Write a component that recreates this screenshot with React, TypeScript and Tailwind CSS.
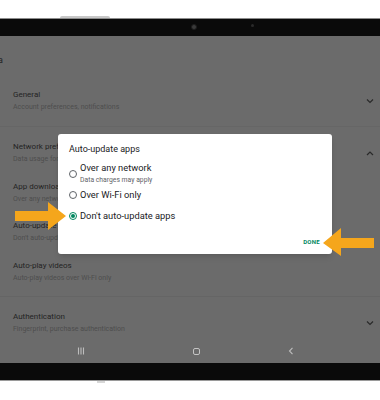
import React from 'react';

function Chevron({ up = false }: { up?: boolean }) {
  return (
    <svg width="8" height="6" viewBox="0 0 8 6" className="shrink-0">
      <path d={up ? 'M1 5 L4 2 L7 5' : 'M1 1.5 L4 4.5 L7 1.5'} fill="none" stroke="#2a2a2a" strokeWidth="1.2" />
    </svg>
  );
}

function Row({ title, sub, chevron, className = '' }: { title: string; sub: string; chevron?: 'up' | 'down'; className?: string }) {
  return (
    <div className={`flex items-center justify-between pl-[13px] pr-[6px] ${className}`}>
      <div className="flex flex-col">
        <span className="text-[8px] leading-[11px] text-[#242424] whitespace-nowrap">{title}</span>
        <span className="mt-[2px] text-[7px] leading-[10px] text-[#4e4e4e] whitespace-nowrap">{sub}</span>
      </div>
      {chevron && <Chevron up={chevron === 'up'} />}
    </div>
  );
}

function Radio({ checked = false }: { checked?: boolean }) {
  return checked ? (
    <span className="w-[8px] h-[8px] rounded-full border border-[#01875f] flex items-center justify-center shrink-0">
      <span className="block w-[4px] h-[4px] rounded-full bg-[#01875f]" />
    </span>
  ) : (
    <span className="block w-[8px] h-[8px] rounded-full border border-[#5f6368] shrink-0" />
  );
}

export default function App() {
  return (
    <div className="w-[380px] h-[400px] bg-white overflow-hidden flex flex-col relative" style={{ fontFamily: 'Roboto, "Noto Sans", sans-serif' }}>
      {/* top edge of the device */}
      <div className="h-[18px] relative shrink-0">
        <div className="absolute left-[60px] top-[16px] w-[50px] h-[2px] bg-[#c8c8c8] rounded-t-sm" />
      </div>
      <div className="h-[1px] bg-[#8c8c8c] shrink-0" />
      <div className="h-[17px] bg-[#0a0a0a] relative shrink-0">
        <span className="absolute left-[191px] top-[5px] w-[6px] h-[6px] rounded-full bg-[#3a3a3a] border border-[#1c1c1c]" />
        <span className="absolute left-[251px] top-[5px] w-[3px] h-[3px] rounded-full bg-[#2a2a2a]" />
      </div>

      {/* screen */}
      <div className="h-[327px] bg-[#6b6b6b] relative flex flex-col shrink-0">
        <div className="h-[53px] pt-[18px]">
          <span className="block -ml-[2px] text-[9px] leading-[12px] text-[#242424]">a</span>
        </div>
        <Row title="General" sub="Account preferences, notifications" chevron="down" />
        <div className="mt-[14px] h-px bg-[#666666]" />
        <Row className="mt-[14px]" title="Network preferences" sub="Data usage for apps" chevron="up" />
        <Row className="mt-[17px]" title="App download preference" sub="Over any network" />
        <Row className="mt-[16px]" title="Auto-update apps" sub="Don't auto-update apps" />
        <Row className="mt-[17px]" title="Auto-play videos" sub="Auto-play videos over Wi-Fi only" />
        <div className="mt-[13px] h-px bg-[#656565]" />
        <Row className="mt-[14px]" title="Authentication" sub="Fingerprint, purchase authentication" chevron="down" />

        {/* navigation bar */}
        <div className="mt-auto h-[24px] flex items-center">
          <div className="w-[160px] flex justify-center pl-[2px]">
            <svg width="8" height="8" viewBox="0 0 8 8">
              <path d="M1.5 0.5 V7.5 M4 0.5 V7.5 M6.5 0.5 V7.5" stroke="#bdbdbd" strokeWidth="1.1" />
            </svg>
          </div>
          <div className="w-[72px] flex justify-center">
            <span className="w-[7px] h-[7px] rounded-[2px] border border-[#c4c4c4]" />
          </div>
          <div className="flex-1 flex justify-center pr-[30px]">
            <svg width="6" height="8" viewBox="0 0 6 8">
              <path d="M4.5 0.8 L1.5 4 L4.5 7.2" fill="none" stroke="#bdbdbd" strokeWidth="1.1" />
            </svg>
          </div>
        </div>

        {/* dialog */}
        <div className="absolute left-[58px] top-[98px] w-[274px] h-[120px] bg-white rounded-[3px] shadow-md flex flex-col pl-[11px] pr-[12px]">
          <span className="mt-[10px] text-[9px] leading-[11px] text-[#202124]">Auto-update apps</span>
          <div className="mt-[7px] flex items-center gap-[3px]">
            <Radio />
            <div className="flex flex-col">
              <span className="text-[9.3px] leading-[12px] text-[#202124]">Over any network</span>
              <span className="mt-[2px] text-[6.8px] leading-[9px] text-[#5f6368]">Data charges may apply</span>
            </div>
          </div>
          <div className="mt-[4px] flex items-center gap-[3px]">
            <Radio />
            <span className="text-[9.3px] leading-[12px] text-[#202124]">Over Wi-Fi only</span>
          </div>
          <div className="mt-[9px] flex items-center gap-[3px]">
            <Radio checked />
            <span className="text-[9.3px] leading-[12px] text-[#202124]">Don't auto-update apps</span>
          </div>
          <div className="mt-auto mb-[8px] flex justify-end">
            <span className="text-[6px] leading-[8px] font-bold tracking-[0.3px] text-[#01875f]">DONE</span>
          </div>
        </div>

        {/* callout arrows */}
        <svg className="absolute left-[14px] top-[165px]" width="54" height="30" viewBox="0 0 54 30">
          <path d="M1 10 H34 V1 L52 15 L34 29 V20 H1 Z" fill="#f5a61c" />
        </svg>
        <svg className="absolute left-[321px] top-[191px]" width="54" height="30" viewBox="0 0 54 30">
          <path d="M53 11 H20 V1 L2 16 L20 29 V21 H53 Z" fill="#f5a61c" />
        </svg>
      </div>

      <div className="h-[17px] bg-[#0a0a0a] shrink-0" />
      <div className="h-[1px] bg-[#9a9a9a] shrink-0" />
      <div className="relative flex-1">
        <div className="absolute left-[97px] top-0 w-[8px] h-[2px] bg-[#d8d8d8]" />
      </div>
    </div>
  );
}
